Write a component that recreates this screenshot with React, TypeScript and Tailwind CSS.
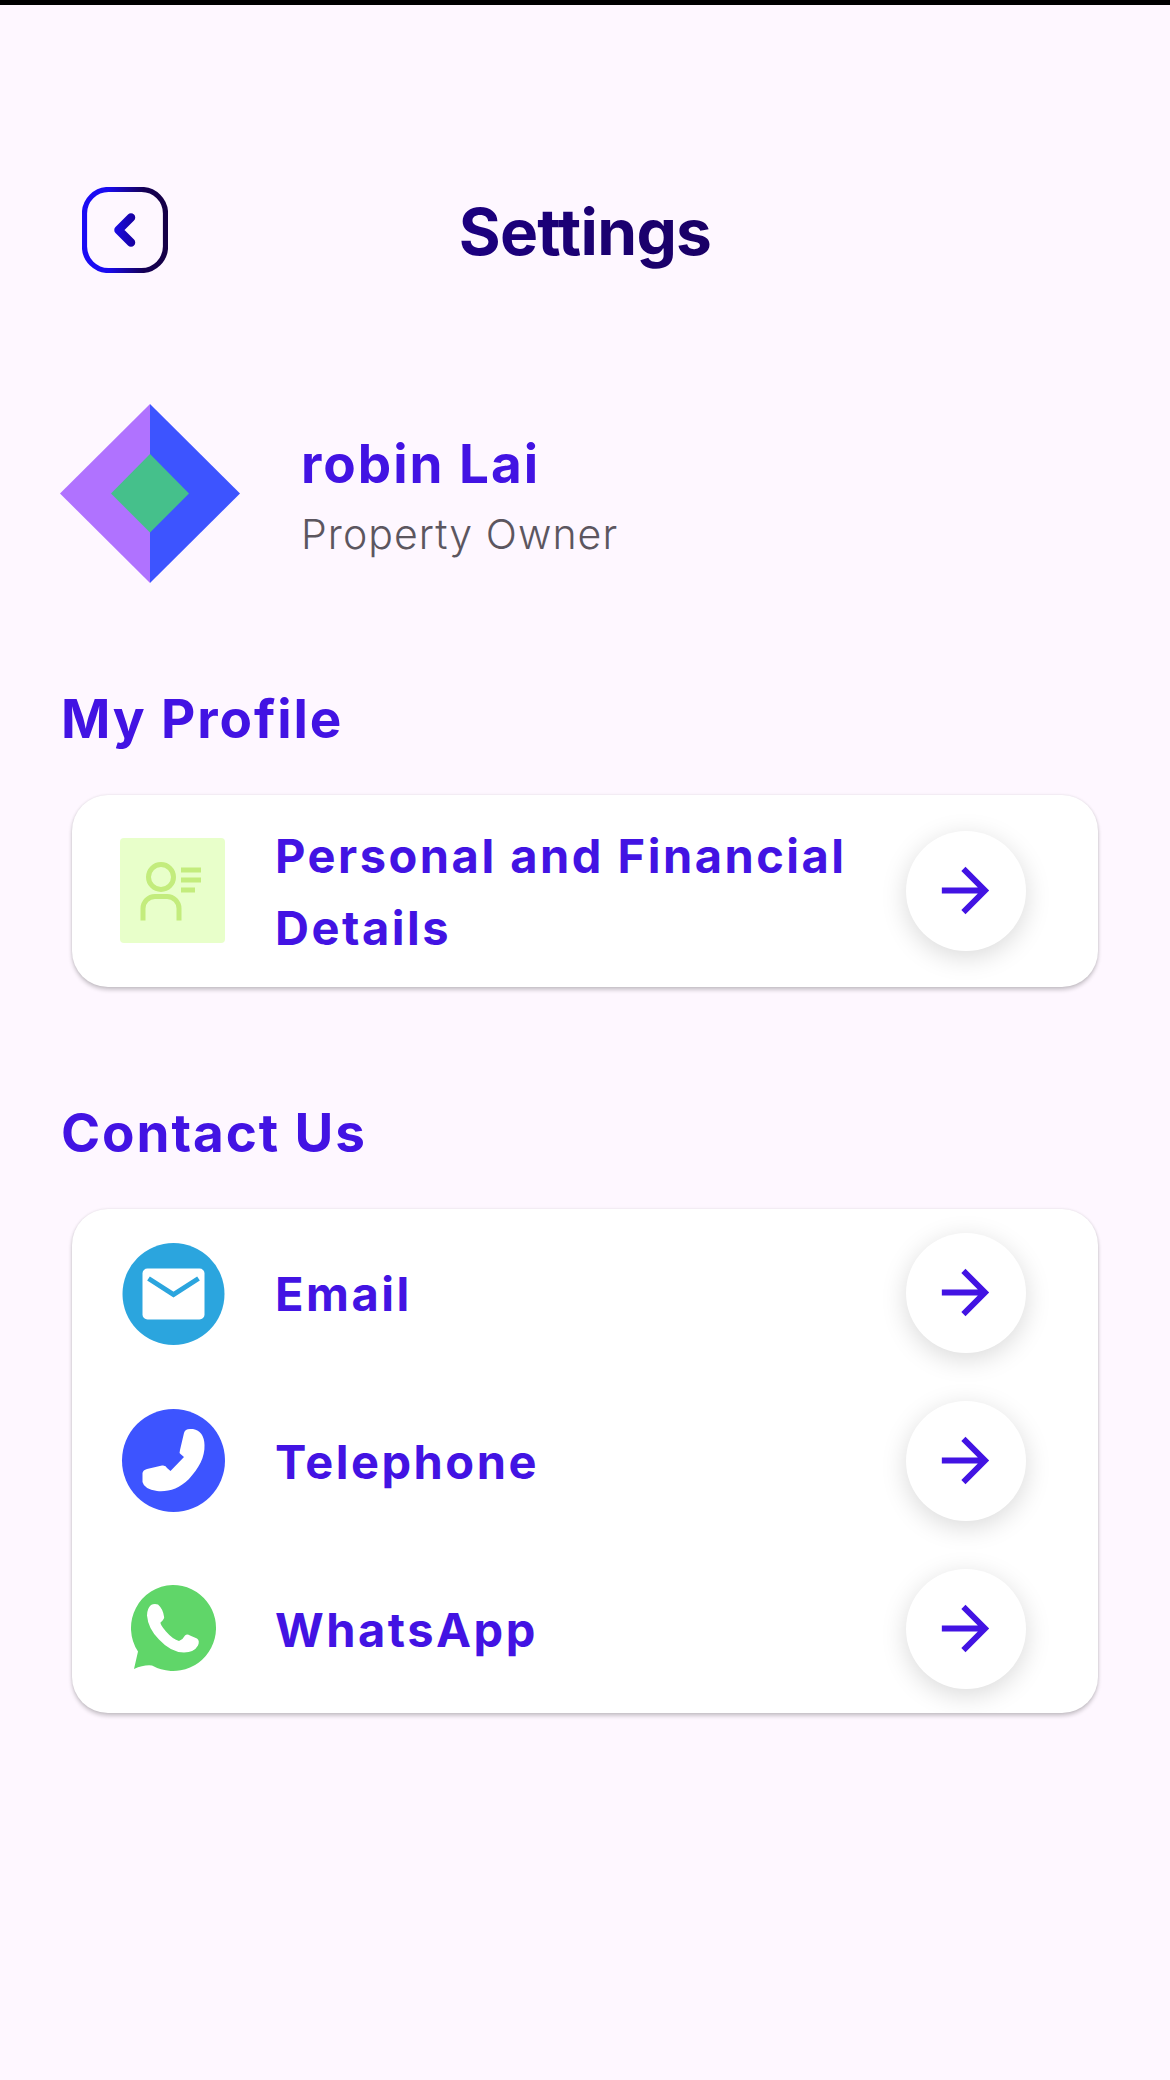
import { MdArrowForward } from "react-icons/md";
import type { ReactNode } from "react";

function BackIcon() {
  return (
    <svg width="86" height="86" viewBox="0 0 86 86" fill="none">
      <defs>
        <linearGradient id="frame" x1="0" y1="0" x2="86" y2="0" gradientUnits="userSpaceOnUse">
          <stop offset="0" stopColor="#1a0bf5" />
          <stop offset="0.3" stopColor="#1a0bf0" />
          <stop offset="0.72" stopColor="#150055" />
          <stop offset="1" stopColor="#150045" />
        </linearGradient>
        <linearGradient id="chevron" x1="32" y1="0" x2="54" y2="0" gradientUnits="userSpaceOnUse">
          <stop offset="0" stopColor="#1a0be8" />
          <stop offset="1" stopColor="#17009a" />
        </linearGradient>
      </defs>
      <rect x="2.5" y="2.5" width="81" height="81" rx="24" stroke="url(#frame)" strokeWidth="5.2" />
      <path d="M49 30.500L36.500 43L49 55.500" stroke="url(#chevron)" strokeWidth="8.500" strokeLinecap="round" strokeLinejoin="round" />
    </svg>
  );
}

function Logo() {
  return (
    <svg width="180" height="180" viewBox="0 0 180 180" className="shrink-0">
      <path d="M90 0L0 89.500L90 179z" fill="#b072ff" />
      <path d="M90 0l90 89.500L90 179z" fill="#3d54ff" />
      <path d="M90 50L129 89.500l-39 39L51 89.500z" fill="#45c08b" />
    </svg>
  );
}

function PersonIcon() {
  return (
    <svg width="106" height="106" viewBox="0 0.500 106 106" fill="none" className="mb-px">
      <rect width="105" height="105" y="0.500" rx="4" fill="#e8ffca" />
      <g stroke="#c3ec7d" strokeWidth="5">
        <circle cx="41" cy="39.500" r="12.500" />
        <path d="M23 83V71a12 12 0 0 1 12-12h12a12 12 0 0 1 12 12v12" />
        <path d="M61 32.500h20M61 42.500h20M61 52.500h14" />
      </g>
    </svg>
  );
}

function EmailIcon() {
  return (
    <svg width="106" height="106" viewBox="0 0 106 106" fill="none">
      <circle cx="53.500" cy="54" r="51" fill="#2ba5de" />
      <rect x="22.500" y="28.500" width="62" height="51" rx="5" fill="#fff" />
      <path d="M28.500 38.500L53.500 54.500L78.500 38.500" stroke="#2ba5de" strokeWidth="5" />
    </svg>
  );
}

function PhoneIcon() {
  return (
    <svg width="106" height="106" viewBox="0 0 106 106">
      <circle cx="53.500" cy="52.500" r="51.500" fill="#3d54ff" />
      <path
        d="M64 25Q65 21 70 21H73Q84 23 84.500 37C85 49 79 60 69 71C59 81 48 84 37 83Q24 81 22.500 74V65Q23 62 27 61L42 57.500Q46 57 47 60L50.500 63L64 49L60.500 46Q59 45 60 42Z"
        fill="#fff"
      />
    </svg>
  );
}

function WhatsAppIcon() {
  return (
    <svg width="106" height="106" viewBox="1 0.500 106 106">
      <path d="M53.500 9.500A43 43 0 1 1 33 90Q25 89 15 93.500L19 76A43 43 0 0 1 53.500 9.500Z" fill="#60d669" />
      <path
        d="M32 29.500Q35 28 39 29Q44 33.500 45 41Q46 43 41.500 47Q41 49 47 56Q54 64 60 65.500Q64 64 66 60Q68 58 71 60L78 63Q81 65 79 70Q75 77 65 77Q52 77 40 64Q29 53 28 40Q28 33 32 29.500Z"
        fill="#fff"
      />
    </svg>
  );
}

function Row({ icon, label }: { icon: ReactNode; label: string }) {
  return (
    <div className="flex h-[168px] items-center pl-12 pr-[72px]">
      {icon}
      <div className="ml-[49px] flex-1 pt-px text-[47px] font-[650] leading-[72px] tracking-[2.500px] whitespace-pre">
        {label}
      </div>
      <button className="flex size-[120px] shrink-0 items-center justify-center rounded-full bg-white shadow-[0_6px_26px_rgba(0,0,0,0.15)]">
        <MdArrowForward className="mb-px mr-px size-[71px]" />
      </button>
    </div>
  );
}

function Card({ children }: { children: ReactNode }) {
  return (
    <div className="mx-[72px] overflow-hidden rounded-[36px] bg-white shadow-[0_3px_4px_rgba(0,0,0,0.2),0_0_3px_rgba(0,0,0,0.1)]">
      {children}
    </div>
  );
}

function SectionTitle({ children }: { children: ReactNode }) {
  return <h2 className="pl-[61px] text-[53px] font-[650] leading-[64px] tracking-[1.900px]">{children}</h2>;
}

export default function App() {
  return (
    <div className="h-[2080px] w-[1170px] overflow-hidden border-t-[5px] border-black bg-[#fef7ff] font-['Inter',sans-serif] text-[#4213e3]">
      <header className="mt-[182px] grid h-[86px] grid-cols-[1fr_auto_1fr] items-start px-[82px]">
        <button className="size-[86px]">
          <BackIcon />
        </button>
        <h1 className="bg-linear-to-r from-[#1c0080] to-[#1a0066] bg-clip-text pt-[2px] text-[64px] font-bold leading-[86px] tracking-[-0.700px] text-transparent">
          Settings
        </h1>
      </header>

      <section className="mt-[131px] flex px-[60px]">
        <Logo />
        <div className="ml-[61px] pt-[28px]">
          <h2 className="text-[53px] font-[650] leading-[64px] tracking-[2px]">robin Lai</h2>
          <p className="mt-[11px] text-[41px] font-light leading-[54px] tracking-[1.050px] text-[#5c565f]">Property Owner</p>
        </div>
      </section>

      <div className="mt-[103px]">
        <SectionTitle>My Profile</SectionTitle>
      </div>
      <div className="mt-[44px]">
        <Card>
          <div className="py-[12px]">
            <Row icon={<PersonIcon />} label={"Personal and Financial\nDetails"} />
          </div>
        </Card>
      </div>

      <div className="mt-[114px]">
        <SectionTitle>Contact Us</SectionTitle>
      </div>
      <div className="mt-[44px]">
        <Card>
          <Row icon={<EmailIcon />} label="Email" />
          <Row icon={<PhoneIcon />} label="Telephone" />
          <Row icon={<WhatsAppIcon />} label="WhatsApp" />
        </Card>
      </div>
    </div>
  );
}
